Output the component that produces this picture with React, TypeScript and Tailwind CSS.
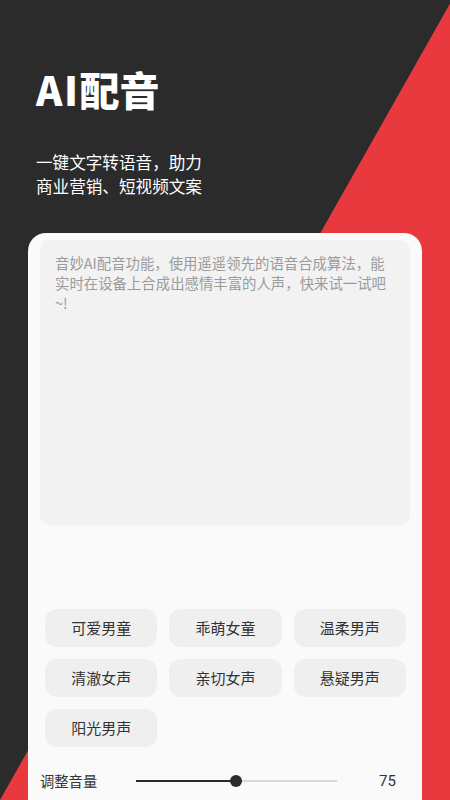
import React from 'react';

const voices = ['可爱男童', '乖萌女童', '温柔男声', '清澈女声', '亲切女声', '悬疑男声', '阳光男声'];

const App: React.FC = () => {
    const volume = 75;
    const cjk = { fontFamily: '"Noto Sans CJK SC", "Noto Sans", sans-serif' };

    return (
        <div className="relative w-[450px] h-[800px] overflow-hidden bg-[#2b2b2b]" style={cjk}>
            {/* red slanted background */}
            <div className="absolute inset-0 bg-[#e8393e] [clip-path:polygon(452px_0,452px_100%,0_100%)]" />

            <div className="relative flex flex-col h-full">
                <h1 className="pt-[65px] pl-[36px] text-[40px] leading-[48px] font-black text-white">
                    <span className="tracking-[1.5px]">AI</span>配音
                </h1>
                <p className="mt-[37px] pl-[36px] text-[16.6px] leading-[24px] text-white">
                    一键文字转语音，助力<br />商业营销、短视频文案
                </p>

                <div className="mt-[35px] mx-[28px] flex-1 bg-[#fafafa] rounded-t-[18px] px-[12px] pt-[7px]">
                    <div className="h-[285px] bg-[#f2f2f2] rounded-[10px] px-[15px] pt-[13px]">
                        <p className="text-[14.4px] leading-[20px] text-[#9b9b9b]">
                            音妙AI配音功能，使用遥遥领先的语音合成算法，能实时在设备上合成出感情丰富的人声，快来试一试吧~!
                        </p>
                    </div>

                    <div className="mt-[84px] pl-[5px] pr-[4px] grid grid-cols-3 gap-[12px]">
                        {voices.map((v) => (
                            <button
                                key={v}
                                className="h-[38px] rounded-[12px] bg-[#efefef] text-[15px] text-[#333333] flex items-center justify-center"
                            >
                                {v}
                            </button>
                        ))}
                    </div>

                    <div className="mt-[22px] h-[24px] flex items-center">
                        <span className="w-[96px] text-[14.3px] text-[#333333]">调整音量</span>
                        <div className="relative w-[201px] h-[2px] bg-[#d8d8d8]">
                            <div className="h-full w-[100px] bg-[#2b2b2b]" />
                            <div className="absolute left-[94px] top-[-5px] w-[12px] h-[12px] rounded-full bg-[#2b2b2b]" />
                        </div>
                        <span className="ml-[42px] text-[15px] text-[#333333]" style={{ fontFamily: 'Roboto, "Noto Sans", sans-serif' }}>{volume}</span>
                    </div>
                </div>
            </div>
        </div>
    );
};

export default App;
